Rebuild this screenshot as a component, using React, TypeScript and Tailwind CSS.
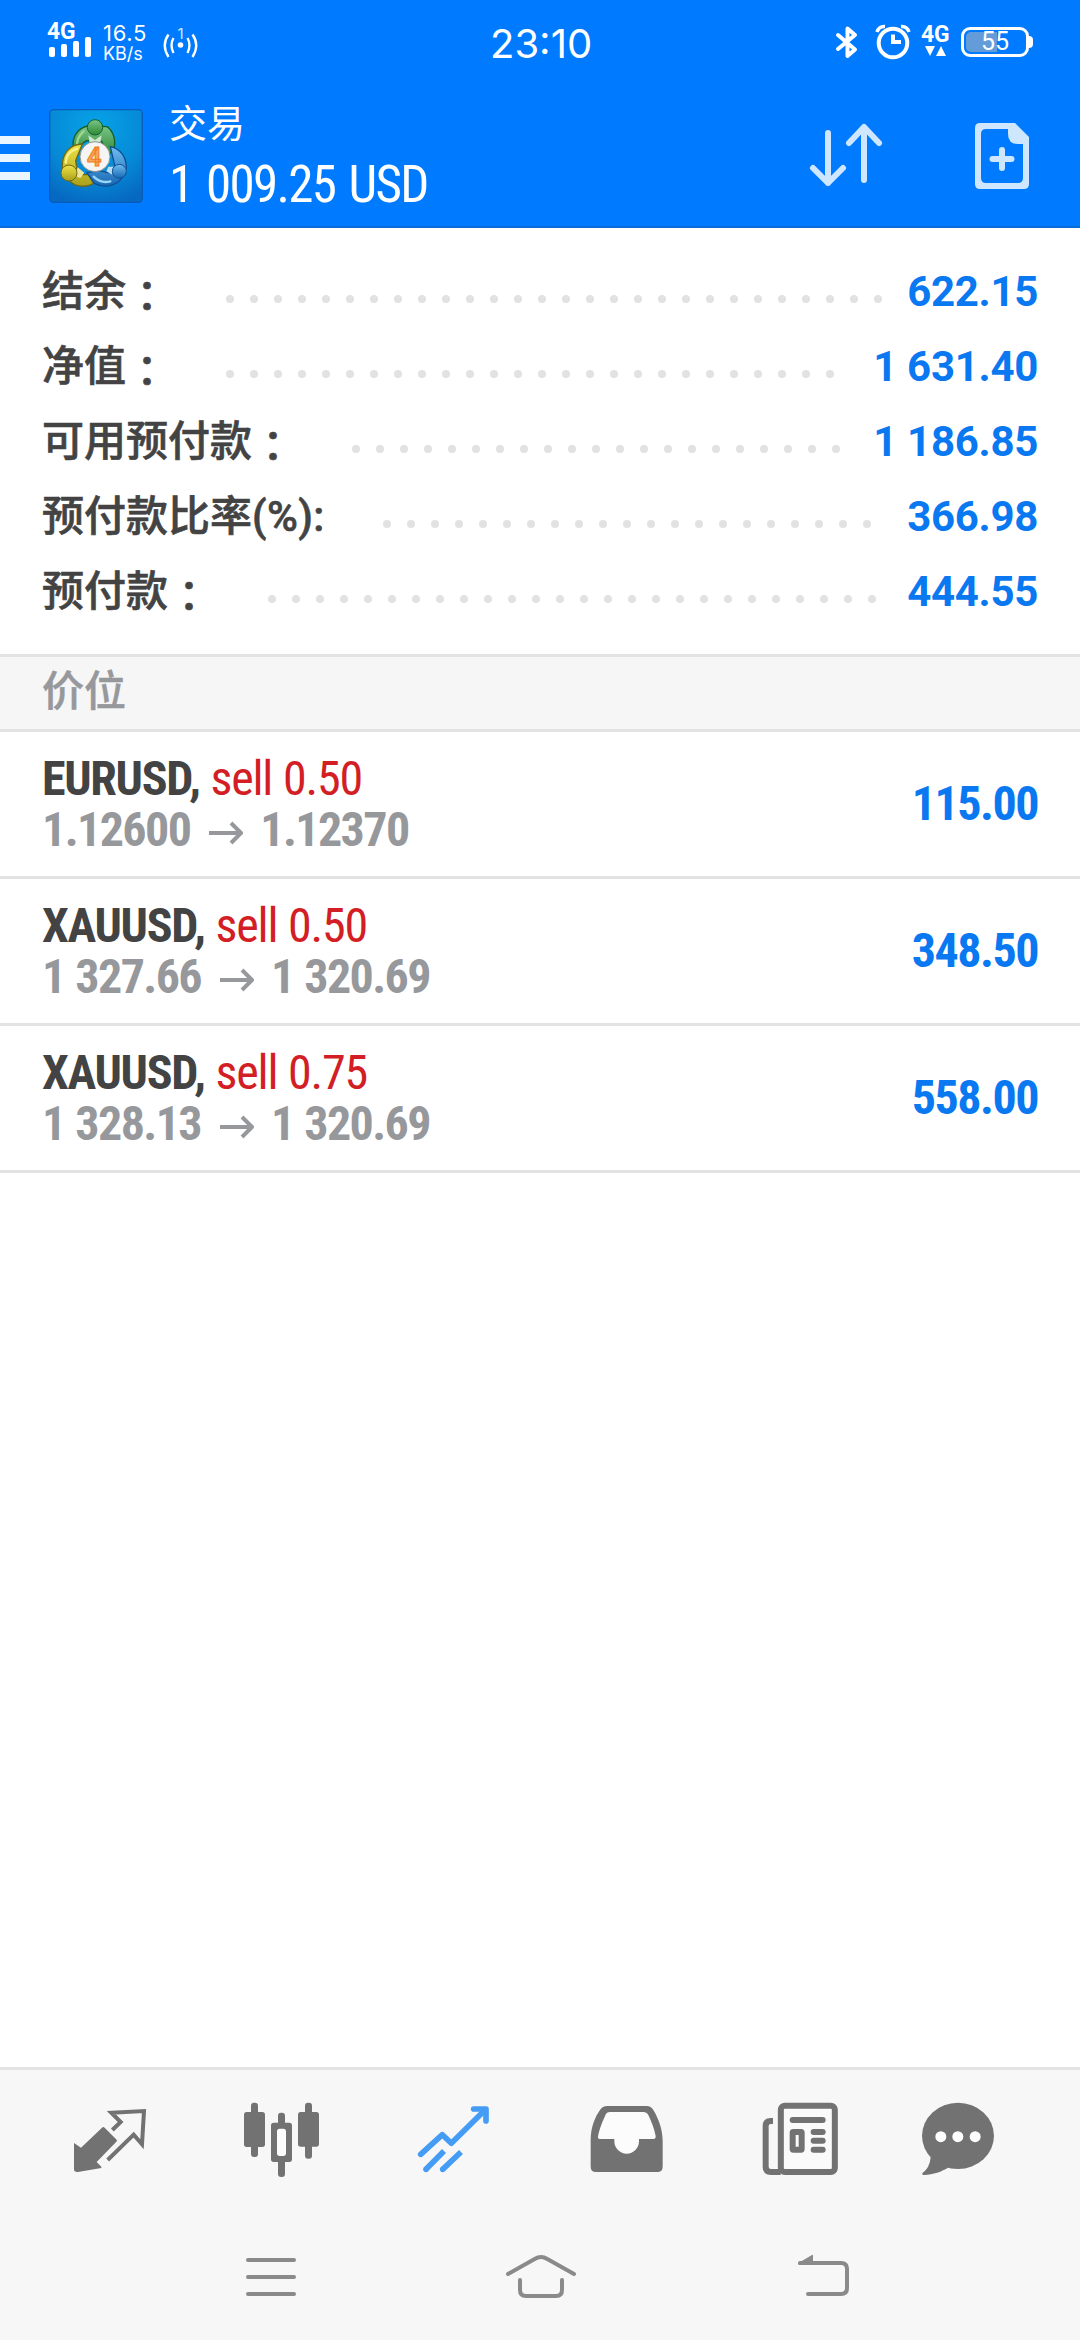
import { ReactNode } from 'react'

type SummaryItem = { label: string; suffix: string; value: string }
type Position = { symbol: string; side: string; open: string; current: string; profit: string }

const summary: SummaryItem[] = [
  { label: '结余', suffix: '：', value: '622.15' },
  { label: '净值', suffix: '：', value: '1 631.40' },
  { label: '可用预付款', suffix: '：', value: '1 186.85' },
  { label: '预付款比率', suffix: '(%):', value: '366.98' },
  { label: '预付款', suffix: '：', value: '444.55' },
]

const positions: Position[] = [
  { symbol: 'EURUSD', side: 'sell 0.50', open: '1.12600', current: '1.12370', profit: '115.00' },
  { symbol: 'XAUUSD', side: 'sell 0.50', open: '1 327.66', current: '1 320.69', profit: '348.50' },
  { symbol: 'XAUUSD', side: 'sell 0.75', open: '1 328.13', current: '1 320.69', profit: '558.00' },
]

const StatusBar = () => (
  <div className="flex h-[84px] items-start pl-12 pr-[47px] font-[Roboto,sans-serif] text-white">
    <div className="mt-[19px] w-[43px]">
      <div className="-ml-px origin-left scale-x-95 text-2xl font-bold leading-6">4G</div>
      <svg viewBox="0 0 43 21" className="-mt-[6px] h-[21px] w-[43px]" fill="currentColor">
        <rect x="1" y="10" width="6" height="10" rx="2" />
        <rect x="13" y="7" width="6" height="13" rx="2" />
        <rect x="25" y="4" width="6" height="16" rx="2" />
        <rect x="37" y="0" width="6" height="20" rx="2" />
      </svg>
    </div>
    <div className="ml-[12px] mt-[22px] w-[60px] font-[Inter,sans-serif]">
      <div className="text-[22px] leading-[22px] tracking-[0.7px]">16.5</div>
      <div className="mt-[1px] text-[18px] leading-[18px]">KB/s</div>
    </div>
    <svg viewBox="0 0 36 36" className="mt-6 size-9" fill="none" stroke="currentColor" strokeWidth="2.4">
      <circle cx="17.500" cy="21" r="2.800" fill="currentColor" stroke="none" />
      <path d="M10.500 14Q6.500 21 10.500 29M24.500 14Q28.500 21 24.500 29" />
      <path d="M5.500 10.500Q-2 21 5.500 33M29.500 10.500Q37 21 29.500 33" />
      <text x="14.500" y="14.500" fontSize="15" fill="#cdeaff" stroke="none" className="font-[Inter,sans-serif]">1</text>
    </svg>
    <div className="ml-[291px] mt-[20px] w-[120px] font-[Inter,sans-serif] text-[40px] leading-[48px]">23:10</div>
    <svg viewBox="0 0 24 36" className="ml-auto mt-[24px] h-9 w-6" fill="none" stroke="currentColor" strokeWidth="4" strokeLinejoin="round" strokeLinecap="round">
      <path d="M4 11L21 25.500L13.500 32V4.500L21 11L4 25" />
    </svg>
    <svg viewBox="0 0 36 36" className="ml-[17px] mt-[24px] size-9" fill="none" stroke="currentColor" strokeWidth="4">
      <circle cx="18" cy="19" r="14.300" />
      <path d="M18 10.500V18H26" />
      <path d="M2 8Q4 2 10 2.500M26 2.500Q32 2 34 8" strokeWidth="3.500" />
    </svg>
    <div className="ml-[10px] mt-[22px] w-[32px]">
      <div className="origin-left scale-x-95 text-2xl font-bold leading-6">4G</div>
      <svg viewBox="0 0 28 11" className="-mt-[1px] h-[11px] w-7" fill="currentColor">
        <path d="M4 1H14L9 11ZM15 11H25L20 1Z" />
      </svg>
    </div>
    <div className="ml-[8px] mt-[27px] flex items-center">
      <div className="relative flex h-[30px] w-[68px] items-center justify-center rounded-[9px] border-[3px] border-white">
        <div className="absolute bottom-[2px] left-[2px] top-[2px] w-[31px] rounded-l-[5px] bg-[#649cd9]" />
        <span className="relative text-[25px] leading-[24px]">55</span>
      </div>
      <div className="h-[12px] w-[4px] rounded-r-[4px] bg-white" />
    </div>
  </div>
)

const AppLogo = () => (
  <svg viewBox="18 15 282 282" className="size-[94px]">
    <defs>
      <radialGradient id="tile" cx="0.5" cy="0.2" r="0.85">
        <stop offset="0" stopColor="#06a4e8" />
        <stop offset="0.6" stopColor="#0689d6" />
        <stop offset="1" stopColor="#0668c0" />
      </radialGradient>
      <linearGradient id="green" x1="0" y1="0" x2="0" y2="1">
        <stop offset="0" stopColor="#7cc48a" />
        <stop offset="1" stopColor="#2c8a33" />
      </linearGradient>
      <linearGradient id="yellow" x1="0" y1="0" x2="0" y2="1">
        <stop offset="0" stopColor="#f0e244" />
        <stop offset="1" stopColor="#a9a01c" />
      </linearGradient>
      <linearGradient id="blue" x1="0" y1="0" x2="0" y2="1">
        <stop offset="0" stopColor="#6fbdf0" />
        <stop offset="1" stopColor="#1767b4" />
      </linearGradient>
    </defs>
    <rect x="20" y="17" width="278" height="278" rx="12" fill="url(#tile)" stroke="#0a5cba" strokeWidth="4" />
    <path d="M90 130C88 98 104 72 134 66L192 68C212 82 220 110 212 140L194 152L176 112L130 110L108 126Z" fill="url(#green)" stroke="#14602c" strokeWidth="4" />
    <path d="M136 94L156 108L176 94L172 116H140Z" fill="#cfe8cc" />
    <path d="M102 130Q100 100 122 82" fill="none" stroke="#a2d88e" strokeWidth="7" strokeLinecap="round" />
    <path d="M118 120C82 120 56 148 58 190L76 226C94 250 130 252 152 238L136 212H104L98 170Z" fill="url(#yellow)" stroke="#706912" strokeWidth="4" />
    <path d="M104 190L124 206L112 222L96 216Z" fill="#efe59a" />
    <path d="M68 176Q70 144 102 134" fill="none" stroke="#f8f08c" strokeWidth="7" strokeLinecap="round" />
    <path d="M202 128C232 134 250 158 250 192L238 220C220 246 184 254 154 238L132 206L166 200L198 206L216 188Z" fill="url(#blue)" stroke="#104f94" strokeWidth="4" />
    <path d="M196 188L214 188L208 212L190 202Z" fill="#b9def5" />
    <path d="M152 218Q174 240 202 232" fill="none" stroke="#9ad6f6" strokeWidth="7" strokeLinecap="round" />
    <circle cx="156" cy="70" r="23" fill="url(#green)" stroke="#14602c" strokeWidth="3" />
    <circle cx="78" cy="207" r="24" fill="url(#yellow)" stroke="#706912" strokeWidth="3" />
    <circle cx="229" cy="202" r="21" fill="url(#blue)" stroke="#104f94" strokeWidth="3" />
    <circle cx="156" cy="158" r="45" fill="#f6f4f4" stroke="#8a968c" strokeWidth="3" />
    <text x="154" y="186" textAnchor="middle" fontSize="76" fill="#f9a65a" stroke="#ee7d24" strokeWidth="3" className="font-[Roboto,sans-serif] font-bold">4</text>
  </svg>
)

const Header = () => (
  <div className="flex h-36 items-start border-b-2 border-[#0a6cd8] text-white">
    <div className="mt-[52px] flex w-[30px] flex-col gap-[10px]">
      <div className="h-2 bg-[#e9f6ff]" />
      <div className="h-2 bg-[#e9f6ff]" />
      <div className="h-2 bg-[#e9f6ff]" />
    </div>
    <div className="ml-[19px] mt-[25px]">
      <AppLogo />
    </div>
    <div className="ml-[26px] mt-[14px] flex flex-col gap-[11px]">
      <span className="font-['Noto_Sans_CJK_SC',sans-serif] text-[38px] leading-[46px]">交易</span>
      <span className="font-['Roboto_Condensed',sans-serif] text-[51px] leading-[60px] tracking-[-1.7px] [word-spacing:3.5px]">1 009.25 USD</span>
    </div>
    <svg viewBox="0 0 76 68" className="ml-auto mt-[38px] h-[68px] w-[76px]" fill="none" stroke="#cfe6ff" strokeWidth="6" strokeLinecap="round" strokeLinejoin="round">
      <path d="M20 11V61M5 46L20 61L35 46" />
      <path d="M56 58V5M41 21L56 5L71 21" />
    </svg>
    <svg viewBox="0 0 54 66" className="ml-[91px] mr-[51px] mt-[39px] h-[66px] w-[54px]">
      <path
        d="M5 0H40L54 14V61Q54 66 49 66H5Q0 66 0 61V5Q0 0 5 0ZM11 6Q6 6 6 11V55Q6 60 11 60H43Q48 60 48 55V21H43Q33 21 33 11V6Z"
        fill="#cfe6ff"
        fillRule="evenodd"
      />
      <path d="M27 27V45M17.500 36H36.500" stroke="#cfe6ff" strokeWidth="6" strokeLinecap="round" />
    </svg>
  </div>
)

const SummaryRow = ({ label, suffix, value }: SummaryItem) => (
  <div className="flex h-[75px] items-center px-[42px]">
    <div className="-mt-[2px] flex items-baseline whitespace-nowrap text-[42px] font-medium leading-[75px] text-[#434343] [-webkit-text-stroke:0.6px_#434343]">
      {suffix === '：' ? (
        <>
          <span className="-translate-y-[2px] font-['Noto_Sans_CJK_SC',sans-serif]">{label}</span>
          <span className="translate-y-[4px] font-['Noto_Sans_CJK_TC',sans-serif]" lang="zh-TW">{suffix}</span>
        </>
      ) : (
        <>
          <span className="font-['Noto_Sans_CJK_SC',sans-serif]">{label}</span>
          <span className="font-[Roboto,sans-serif] tracking-[0.4px]">{suffix}</span>
        </>
      )}
    </div>
    {/* dot leader: dots that do not fit wrap out of view */}
    <div className="ml-[58px] mr-[19px] mt-4 flex h-2 flex-1 flex-wrap gap-x-4 overflow-hidden">
      {Array.from({ length: 28 }, (_, i) => (
        <div key={i} className="size-2 rounded-full bg-[#e2e2e2]" />
      ))}
    </div>
    <span className="mt-px font-[Roboto,sans-serif] text-[42px] font-bold leading-[75px] tracking-[-0.3px] text-[#0a78f0]">{value}</span>
  </div>
)

const PositionRow = ({ symbol, side, open, current, profit }: Position) => (
  <div className="flex h-[147px] items-center justify-between border-b-[3px] border-[#e3e3e3] px-[42px] font-['Roboto_Condensed',sans-serif] text-[48px] leading-[51px]">
    <div>
      <div>
        <span className="font-bold tracking-[-1.3px] text-[#434343]">{symbol},</span>
        <span className="tracking-[-1.2px] text-[#d21e24] [word-spacing:1px]"> {side}</span>
      </div>
      <div className="flex items-center font-bold tracking-[-1.6px] text-[#97989c] [word-spacing:1.2px]">
        <span>{open}</span>
        <svg viewBox="0 0 34 24" className="ml-[19px] mr-[17px] mt-[7px] h-6 w-[34px]" fill="none" stroke="currentColor" strokeWidth="4">
          <path d="M0 12H31M22 2L32 12L22 22" strokeLinejoin="round" />
        </svg>
        <span>{current}</span>
      </div>
    </div>
    <span className="-mt-[2px] font-bold tracking-[-1.5px] text-[#0a78f0]">{profit}</span>
  </div>
)

const TabIcon = ({ box, children, active }: { box: string; children: ReactNode; active?: boolean }) => (
  <button className={active ? 'flex justify-center text-[#459cf5]' : 'flex justify-center text-[#727272]'}>
    <svg viewBox={box} className="size-24 overflow-visible" fill="none" stroke="currentColor">
      {children}
    </svg>
  </button>
)

const TabBar = () => (
  <div className="grid h-[141px] grid-cols-6 items-start border-t-[3px] border-[#e3e3e3] px-6 pt-[22px]">
    <TabIcon box="186 126 288 288">
      <path d="M222 279L243 293L306 233Q310 229 314 233L350 269Q352 272 349 275L290 336L304 350V354L234 366Q222 367 222 358Z" fill="currentColor" stroke="none" />
      <path d="M337 240L362 216L334 188L432 183L426 283L401 254L323 330" strokeWidth="12" />
    </TabIcon>
    <TabIcon box="702 126 288 288">
      <g fill="currentColor" stroke="none">
        <rect x="732" y="186" width="63" height="105" rx="8" />
        <rect x="753" y="158" width="21" height="163" rx="9" />
        <rect x="894" y="186" width="63" height="104" rx="8" />
        <rect x="915" y="158" width="21" height="168" rx="9" />
        <rect x="813" y="218" width="63" height="118" rx="8" />
        <rect x="834" y="188" width="21" height="193" rx="9" />
      </g>
      <rect x="831" y="236" width="27" height="82" rx="8" fill="#fcfcfc" stroke="none" />
    </TabIcon>
    <TabIcon box="138 126 288 288" active>
      <path d="M182 313L247 254L274 280L375 180" strokeWidth="17" strokeLinecap="round" strokeLinejoin="round" />
      <path d="M341 177H378V213" strokeWidth="17" strokeLinecap="round" strokeLinejoin="round" />
      <path d="M198 358L252 303M248 358L303 306" strokeWidth="17" />
      <circle cx="198" cy="358" r="8.500" fill="currentColor" stroke="none" />
      <circle cx="248" cy="358" r="8.500" fill="currentColor" stroke="none" />
    </TabIcon>
    <TabIcon box="654 126 288 288">
      <path
        d="M692 270C692 230 706 200 720 180Q727 168 742 168H860Q873 168 880 180C896 206 908 240 908 272V350Q908 366 892 366H708Q692 366 692 350Z"
        fill="currentColor"
        stroke="none"
      />
      <path
        d="M714 260C718 235 730 210 736 196Q740 186 750 186H850Q860 186 865 195C875 215 883 238 887 258Q888 267 880 267H837V274A37 37 0 0 1 763 274V267H722Q713 267 714 260Z"
        fill="#fcfcfc"
        stroke="none"
      />
    </TabIcon>
    <TabIcon box="90 126 288 288">
      <rect x="182.500" y="167" width="162" height="199" rx="12" strokeWidth="18" fill="#fafafa" />
      <path d="M159 213H152Q137 213 137 228V350Q137 366 153 366H182" strokeWidth="18" />
      <path d="M218 210H308M281 246H308M281 272.500H308M281 299.500H308" strokeWidth="18" strokeLinecap="round" />
      <rect x="218" y="246" width="27" height="53" rx="2" strokeWidth="18" strokeLinejoin="round" />
    </TabIcon>
    <TabIcon box="606 126 288 288">
      <g fill="currentColor" stroke="none">
        <ellipse cx="714" cy="257.500" rx="108" ry="99.500" />
        <path d="M632 320C630 345 620 360 608 368Q605 375 612 375C640 374 665 366 686 352Z" />
      </g>
      <g fill="#fff" stroke="none">
        <circle cx="662.500" cy="260" r="16.500" />
        <circle cx="713.500" cy="260" r="16.500" />
        <circle cx="765.500" cy="260" r="16.500" />
      </g>
    </TabIcon>
  </div>
)

const SystemNav = () => (
  <div className="flex flex-1 items-start justify-between pl-[235px] pr-[221px] pt-[31px] text-[#8a8a8a]">
    <svg viewBox="705 567 216 216" className="size-[72px]" fill="none" stroke="currentColor" strokeWidth="12" strokeLinecap="round">
      <path d="M744 630H882M744 681H882M744 732H882" />
    </svg>
    <svg viewBox="453 567 216 216" className="size-[72px] overflow-visible" fill="none" stroke="currentColor" strokeWidth="12" strokeLinecap="round">
      <path d="M444 672L524 627Q543 615 562 627L642 672" />
      <path d="M480 690V720Q480 738 498 738H588Q606 738 606 720V690" />
    </svg>
    <svg viewBox="201 567 216 216" className="size-[72px]" fill="none" stroke="currentColor" strokeWidth="12">
      <path d="M240 639H363Q381 639 381 656V715Q381 732 363 732H264" strokeLinecap="round" />
      <path d="M234 640L277 614L279 616V644H236Z" fill="currentColor" stroke="none" />
    </svg>
  </div>
)

const App = () => {
  return (
    <div className="flex h-[2340px] w-[1080px] flex-col overflow-hidden bg-white">
      <div className="bg-[#007aff]">
        <StatusBar />
        <Header />
      </div>

      <div className="h-[426px] pt-[25px]">
        {summary.map((item) => (
          <SummaryRow key={item.label} {...item} />
        ))}
      </div>

      <div className="h-[78px] border-y-[3px] border-[#e3e3e3] bg-[#f6f6f6] px-[42px] font-['Noto_Sans_CJK_SC',sans-serif] text-[42px] font-medium leading-[62px] text-[#97989c] [-webkit-text-stroke:0.5px_#97989c]">
        价位
      </div>
      {positions.map((position, i) => (
        <PositionRow key={i} {...position} />
      ))}

      <div className="mt-auto flex h-[273px] flex-col bg-[#f7f7f7]">
        <TabBar />
        <SystemNav />
      </div>
    </div>
  )
}

export default App
